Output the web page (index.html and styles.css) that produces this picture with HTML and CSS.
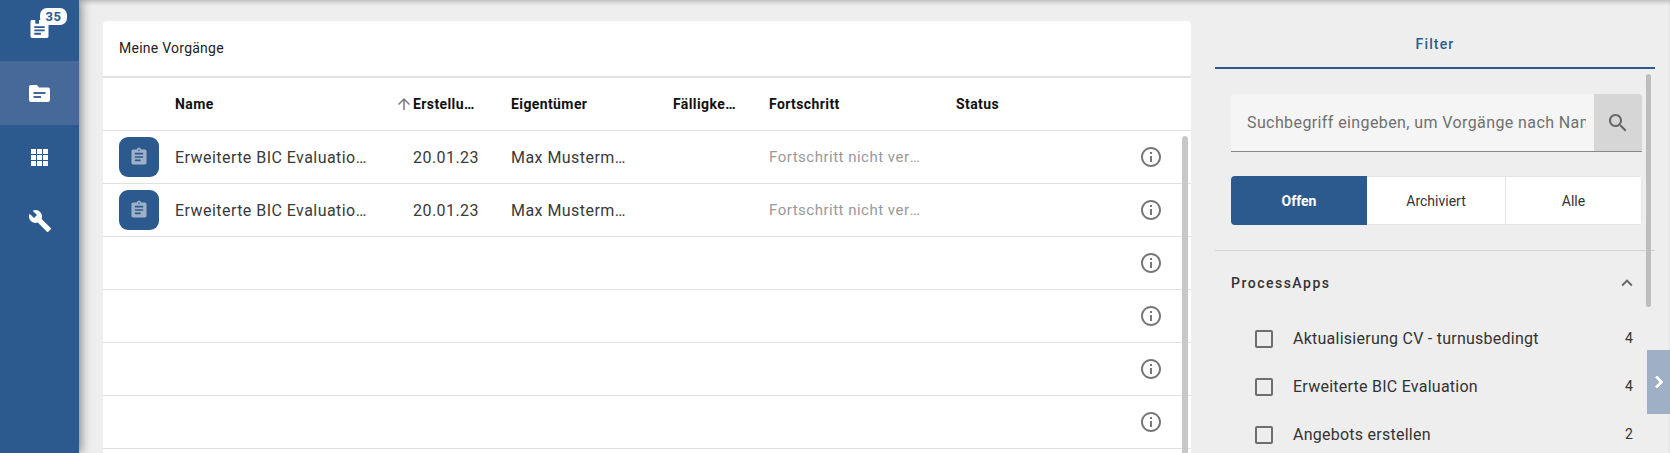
FILE: index.html
```html
<!DOCTYPE html>
<html lang="de">
<head>
<meta charset="utf-8">
<title>Meine Vorgänge</title>
<link rel="stylesheet" href="styles.css">
</head>
<body>
<div class="app">
  <nav class="sidebar">
    <a class="nav-item nav-first">
      <span class="nav-icon-wrap">
        <svg class="nav-doc" viewBox="0 0 19 19"><path fill="#fff" d="M1.500 0H5L5 3C5 3.600 5.400 4 6 4H9V0H17.500C18.300 0 19 .7 19 1.500V17.500C19 18.300 18.300 19 17.500 19H1.500C.7 19 0 18.300 0 17.500V1.500C0 .7.7 0 1.500 0Z"/><path fill="#2d5a8e" d="M4 6.500h11v2H4zM4 10h11v2H4zM4 13.500h7v2H4z"/></svg>
        <span class="badge">35</span>
      </span>
    </a>
    <a class="nav-item active">
      <svg class="nav-folder" viewBox="0 0 21 17"><path fill="#fff" d="M2 0H8L10 2.500H19C20.100 2.500 21 3.400 21 4.500V15C21 16.100 20.100 17 19 17H2C.9 17 0 16.100 0 15V2C0 .9.9 0 2 0Z"/><path fill="#46699a" d="M4.500 7H16.500V9H4.500zM4.500 11H12V13H4.500z"/></svg>
    </a>
    <a class="nav-item">
      <svg class="nav-apps" viewBox="0 0 17 17"><path fill="#fff" d="M0 0h5v5H0zM6 0h5v5H6zM12 0h5v5h-5zM0 6h5v5H0zM6 6h5v5H6zM12 6h5v5h-5zM0 12h5v5H0zM6 12h5v5H6zM12 12h5v5h-5z"/></svg>
    </a>
    <a class="nav-item">
      <svg class="nav-tool" viewBox="0 0 24 24"><path fill="#fff" d="M22.700 19l-9.100-9.100c.9-2.300.4-5-1.500-6.900-2-2-5-2.400-7.400-1.300L9 6 6 9 1.600 4.700C.4 7.100.9 10.100 2.900 12.100c1.900 1.900 4.600 2.400 6.900 1.500l9.100 9.100c.4.400 1 .4 1.400 0l2.300-2.300c.5-.4.5-1.100.1-1.400z"/></svg>
    </a>
  </nav>

  <main class="main">
    <section class="card">
      <header class="card-title">Meine Vorgänge</header>
      <div class="row head">
        <div class="cell"></div>
        <div class="cell"><span class="clip">Name</span></div>
        <div class="cell sorted">
          <svg class="sort" viewBox="0 0 24 24"><path fill="#777" d="M4 12l1.410 1.410L11 7.830V20h2V7.830l5.580 5.590L20 12l-8-8-8 8z"/></svg>
          <span class="clip">Erstellungsdatum</span>
        </div>
        <div class="cell owner"><span class="clip">Eigentümer</span></div>
        <div class="cell"><span class="clip">Fälligkeitsdatum</span></div>
        <div class="cell"><span class="clip">Fortschritt</span></div>
        <div class="cell"><span class="clip">Status</span></div>
      </div>
      <div class="rows">
        <div class="row">
          <div class="cell icon-cell"><span class="app-icon"><svg viewBox="0 0 24 24"><path fill="#9fb1c9" d="M19 3h-4.180C14.400 1.840 13.300 1 12 1c-1.300 0-2.400.84-2.820 2H5c-1.100 0-2 .9-2 2v14c0 1.100.9 2 2 2h14c1.100 0 2-.9 2-2V5c0-1.100-.9-2-2-2zm-7 0c.55 0 1 .45 1 1s-.45 1-1 1-1-.45-1-1 .45-1 1-1zm2 14H7v-2h7v2zm3-4H7v-2h10v2zm0-4H7V7h10v2z"/></svg></span></div>
          <div class="cell"><span class="clip">Erweiterte BIC Evaluation - Max Mustermann</span></div>
          <div class="cell date">20.01.23</div>
          <div class="cell owner"><span class="clip">Max Mustermann</span></div>
          <div class="cell"></div>
          <div class="cell muted"><span class="clip">Fortschritt nicht verfügbar</span></div>
          <div class="cell"></div>
          <div class="info-cell"><svg class="info" viewBox="0 0 24 24"><path fill="#777" d="M11 7h2v2h-2zm0 4h2v6h-2zm1-9C6.480 2 2 6.480 2 12s4.480 10 10 10 10-4.480 10-10S17.520 2 12 2zm0 18c-4.410 0-8-3.590-8-8s3.590-8 8-8 8 3.590 8 8-3.590 8-8 8z"/></svg></div>
        </div>
        <div class="row">
          <div class="cell icon-cell"><span class="app-icon"><svg viewBox="0 0 24 24"><path fill="#9fb1c9" d="M19 3h-4.180C14.400 1.840 13.300 1 12 1c-1.300 0-2.400.84-2.820 2H5c-1.100 0-2 .9-2 2v14c0 1.100.9 2 2 2h14c1.100 0 2-.9 2-2V5c0-1.100-.9-2-2-2zm-7 0c.55 0 1 .45 1 1s-.45 1-1 1-1-.45-1-1 .45-1 1-1zm2 14H7v-2h7v2zm3-4H7v-2h10v2zm0-4H7V7h10v2z"/></svg></span></div>
          <div class="cell"><span class="clip">Erweiterte BIC Evaluation - Max Mustermann</span></div>
          <div class="cell date">20.01.23</div>
          <div class="cell owner"><span class="clip">Max Mustermann</span></div>
          <div class="cell"></div>
          <div class="cell muted"><span class="clip">Fortschritt nicht verfügbar</span></div>
          <div class="cell"></div>
          <div class="info-cell"><svg class="info" viewBox="0 0 24 24"><path fill="#777" d="M11 7h2v2h-2zm0 4h2v6h-2zm1-9C6.480 2 2 6.480 2 12s4.480 10 10 10 10-4.480 10-10S17.520 2 12 2zm0 18c-4.410 0-8-3.590-8-8s3.590-8 8-8 8 3.590 8 8-3.590 8-8 8z"/></svg></div>
        </div>
        <div class="row empty"><div class="info-cell"><svg class="info" viewBox="0 0 24 24"><path fill="#777" d="M11 7h2v2h-2zm0 4h2v6h-2zm1-9C6.480 2 2 6.480 2 12s4.480 10 10 10 10-4.480 10-10S17.520 2 12 2zm0 18c-4.410 0-8-3.590-8-8s3.590-8 8-8 8 3.590 8 8-3.590 8-8 8z"/></svg></div></div>
        <div class="row empty"><div class="info-cell"><svg class="info" viewBox="0 0 24 24"><path fill="#777" d="M11 7h2v2h-2zm0 4h2v6h-2zm1-9C6.480 2 2 6.480 2 12s4.480 10 10 10 10-4.480 10-10S17.520 2 12 2zm0 18c-4.410 0-8-3.590-8-8s3.590-8 8-8 8 3.590 8 8-3.590 8-8 8z"/></svg></div></div>
        <div class="row empty"><div class="info-cell"><svg class="info" viewBox="0 0 24 24"><path fill="#777" d="M11 7h2v2h-2zm0 4h2v6h-2zm1-9C6.480 2 2 6.480 2 12s4.480 10 10 10 10-4.480 10-10S17.520 2 12 2zm0 18c-4.410 0-8-3.590-8-8s3.590-8 8-8 8 3.590 8 8-3.590 8-8 8z"/></svg></div></div>
        <div class="row empty"><div class="info-cell"><svg class="info" viewBox="0 0 24 24"><path fill="#777" d="M11 7h2v2h-2zm0 4h2v6h-2zm1-9C6.480 2 2 6.480 2 12s4.480 10 10 10 10-4.480 10-10S17.520 2 12 2zm0 18c-4.410 0-8-3.590-8-8s3.590-8 8-8 8 3.590 8 8-3.590 8-8 8z"/></svg></div></div>
        <div class="row empty"></div>
        <span class="table-scroll"></span>
      </div>
    </section>

    <aside class="panel">
      <div class="tab">Filter</div>
      <div class="panel-body">
        <div class="search">
          <span class="search-text">Suchbegriff eingeben, um Vorgänge nach Namen zu filtern</span>
          <span class="search-btn"><svg viewBox="0 0 24 24"><path fill="#666" d="M15.500 14h-.79l-.28-.27C15.410 12.590 16 11.110 16 9.500 16 5.910 13.090 3 9.500 3S3 5.910 3 9.500 5.910 16 9.500 16c1.610 0 3.090-.59 4.230-1.570l.27.28v.79l5 4.990L20.490 19l-4.990-5zm-6 0C7.010 14 5 11.990 5 9.500S7.010 5 9.500 5 14 7.010 14 9.500 11.990 14 9.500 14z"/></svg></span>
        </div>
        <div class="segments">
          <span class="seg seg-on">Offen</span>
          <span class="seg">Archiviert</span>
          <span class="seg">Alle</span>
        </div>
      </div>
      <div class="section">
        <div class="section-head">
          <span>ProcessApps</span>
          <svg viewBox="0 0 24 24"><path fill="#666" d="M12 8l-6 6 1.410 1.410L12 10.830l4.590 4.580L18 14z"/></svg>
        </div>
        <div class="check-row"><span class="box"></span><span class="check-label">Aktualisierung CV - turnusbedingt</span><span class="count">4</span></div>
        <div class="check-row"><span class="box"></span><span class="check-label">Erweiterte BIC Evaluation</span><span class="count">4</span></div>
        <div class="check-row"><span class="box"></span><span class="check-label">Angebots erstellen</span><span class="count">2</span></div>
      </div>
      <span class="panel-scroll"></span>
    </aside>
    <span class="collapse"><svg viewBox="0 0 24 24"><path fill="#fff" d="M10 6L8.590 7.410 13.170 12l-4.580 4.590L10 18l6-6z" stroke="#fff" stroke-width="1"/></svg></span>
  </main>
</div>
</body>
</html>
```
FILE: styles.css
```css
* { box-sizing: border-box; }
html, body { margin: 0; height: 100%; overflow: hidden; }
body { font-family: Roboto, "Liberation Sans", sans-serif; color: #333; background: #eee; }

.app { display: flex; height: 453px; overflow: hidden; }

.sidebar {
  width: 79px;
  flex: none;
  background: #2d5a8e;
  box-shadow: 2px 0 10px rgba(0,0,0,.45);
  position: relative;
  z-index: 2;
}
.nav-item { display: flex; align-items: center; justify-content: center; height: 64px; }
.nav-first { height: 61px; padding-bottom: 3px; }
.active { background: #46699a; }
.nav-icon-wrap { position: relative; display: block; width: 19px; height: 18px; }
.nav-doc { display: block; width: 19px; height: 18px; }
.nav-folder { width: 21px; height: 17px; }
.nav-apps { width: 17px; height: 17px; margin-top: 1px; }
.nav-tool { width: 24px; height: 24px; }
.badge {
  position: absolute;
  left: 10px;
  top: -12px;
  width: 27px;
  height: 17px;
  border-radius: 7px;
  background: #fff;
  color: #2d5a8e;
  font-size: 13px;
  font-weight: 700;
  line-height: 17px;
  text-align: center;
  letter-spacing: .5px;
}

.main {
  flex: 1;
  display: flex;
  position: relative;
  padding-left: 24px;
  min-width: 0;
  box-shadow: inset 0 4px 4px -2px rgba(0,0,0,.22);
}

.card {
  width: 1088px;
  flex: none;
  margin-top: 21px;
  height: 460px;
  background: #fff;
  border-radius: 4px 4px 0 0;
}
.card-title {
  height: 57px;
  border-bottom: 2px solid #e2e2e2;
  padding-left: 16px;
  font-size: 14px;
  line-height: 55px;
  color: #222;
  letter-spacing: .25px;
}

.row {
  display: grid;
  grid-template-columns: 56px 224px 112px 162px 96px 187px 1fr;
  height: 53px;
  border-bottom: 1px solid #e0e0e0;
  align-items: center;
  position: relative;
  font-size: 16px;
  letter-spacing: .45px;
  color: #3a3a3a;
}
.head {
  height: 53px;
  font-size: 14px;
  font-weight: 700;
  letter-spacing: .4px;
  color: #111;
}
.cell { padding: 0 16px; min-width: 0; display: flex; align-items: center; }
.clip { white-space: nowrap; overflow: hidden; text-overflow: ellipsis; display: block; min-width: 0; }
.sorted { justify-content: flex-end; padding: 0 18px 0 0; }
.sort { width: 18px; height: 18px; flex: none; margin-right: 0; }
.sorted .clip { width: 64px; }
.owner { padding-right: 28px; }
.date { justify-content: flex-end; padding-right: 16px; }
.muted { color: #999; font-size: 15px; letter-spacing: .5px; }
.icon-cell { padding: 0 0 0 16px; }
.app-icon {
  width: 40px;
  height: 40px;
  flex: none;
  border-radius: 9px;
  background: #2d5a8e;
  display: flex;
  align-items: center;
  justify-content: center;
}
.app-icon svg { width: 20px; height: 20px; }

.rows { position: relative; }
.info-cell { position: absolute; left: 1036px; top: 14px; width: 24px; height: 24px; }
.info { display: block; width: 24px; height: 24px; }
.table-scroll {
  position: absolute;
  left: 1079px;
  top: 5px;
  width: 6px;
  height: 340px;
  border-radius: 3px;
  background: #c8c8c8;
}

.panel { width: 440px; flex: none; margin-left: 24px; position: relative; }
.tab {
  height: 69px;
  border-bottom: 2px solid #2d5a8e;
  text-align: center;
  padding-top: 35px;
  font-size: 14px;
  line-height: 18px;
  font-weight: 500;
  letter-spacing: 1.15px;
  color: #2d5a8e;
}
.panel-body { padding: 25px 13px 25px 16px; border-bottom: 1px solid #d5d5d5; height: 182px; }
.search {
  height: 58px;
  display: flex;
  background: #f5f5f5;
  border-bottom: 1px solid #888;
  border-radius: 4px 4px 0 0;
  overflow: hidden;
}
.search-text {
  flex: 1;
  min-width: 0;
  padding: 0 0 0 16px;
  margin-right: 8px;
  font-size: 16px;
  letter-spacing: .4px;
  line-height: 57px;
  color: #707070;
  white-space: nowrap;
  overflow: hidden;
}
.search-btn {
  width: 48px;
  flex: none;
  background: #d6d6d6;
  display: flex;
  align-items: center;
  justify-content: center;
}
.search-btn svg { width: 24px; height: 24px; }

.segments {
  margin-top: 24px;
  height: 49px;
  display: grid;
  grid-template-columns: 136px 139px 1fr;
  background: #fff;
  border-radius: 4px;
  overflow: hidden;
}
.seg {
  display: flex;
  align-items: center;
  justify-content: center;
  font-size: 14px;
  color: #333;
  border: 1px solid #e4e4e4;
  border-left: 0;
}
.seg-on { background: #2d5a8e; color: #fff; font-weight: 700; border: 0; }

.section { padding: 0 22px 0 16px; }
.section-head {
  height: 64px;
  display: flex;
  align-items: center;
  justify-content: space-between;
  font-size: 14px;
  font-weight: 500;
  letter-spacing: 1.5px;
  color: #333;
}
.section-head svg { width: 22px; height: 22px; margin-right: -5px; }
.check-row {
  height: 48px;
  display: flex;
  align-items: center;
  padding-left: 24px;
  font-size: 16px;
  letter-spacing: .25px;
  color: #333;
}
.box { width: 18px; height: 18px; flex: none; border: 2px solid #6e6e6e; border-radius: 2px; margin-right: 20px; }
.check-label { flex: 1; white-space: nowrap; padding-bottom: 2px; }
.count { font-size: 14px; padding-bottom: 2px; }

.panel-scroll {
  position: absolute;
  left: 431px;
  top: 74px;
  width: 5px;
  height: 233px;
  border-radius: 3px;
  background: #bdbdbd;
}
.collapse {
  position: absolute;
  right: 0;
  top: 350px;
  width: 23px;
  height: 64px;
  background: #9eafc6;
  display: flex;
  align-items: center;
  justify-content: center;
}
.collapse svg { width: 24px; height: 24px; flex: none; }
```
